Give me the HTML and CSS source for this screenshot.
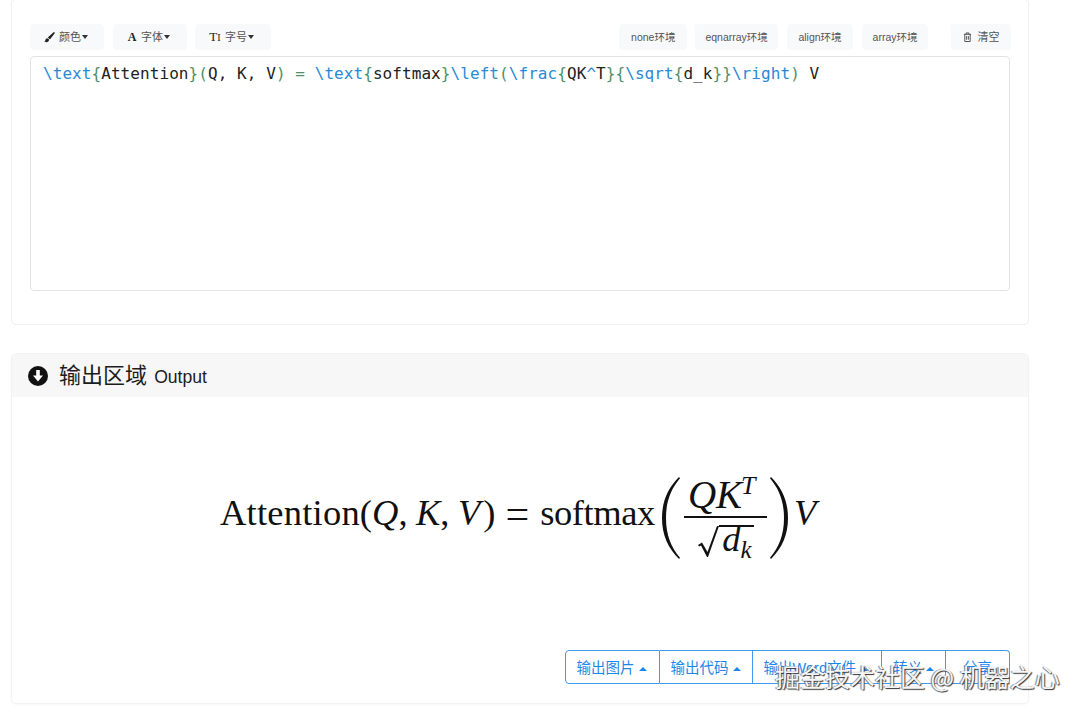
FILE: index.html
```html
<!DOCTYPE html>
<html lang="zh">
<head>
<meta charset="utf-8">
<title>公式编辑器</title>
<link rel="stylesheet" href="styles.css">
</head>
<body>
<main class="page">
  <section class="card input-card">
    <div class="toolbar">
      <button class="tool first"><svg class="ti" viewBox="0 0 12 12"><path d="M11.6.4c-.4-.4-1-.3-1.500.1L5 5.200c-.3.3-.6.7-.7 1.100l2 1.600c.4-.2.8-.5 1-.9l4.200-5.300c.4-.4.4-1 .1-1.300zM3.700 6.900C2.400 7 1.700 7.800 1.500 9c-.1.7-.6 1.100-1.300 1.200 1 1 3.200 1.300 4.500.2.700-.6.900-1.400.800-2.100z"/></svg>颜色<i class="caret"></i></button>
      <button class="tool font"><span class="ta">A</span>字体<i class="caret"></i></button>
      <button class="tool size"><span class="tt">T<small>I</small></span>字号<i class="caret"></i></button>
      <div class="spacer"></div>
      <button class="tool env none">none环境</button>
      <button class="tool env eqn">eqnarray环境</button>
      <button class="tool env align">align环境</button>
      <button class="tool env arr">array环境</button>
      <button class="tool clear"><svg class="tr" viewBox="0 0 10 11"><path fill="none" stroke="#444" d="M1 2.500h8M3.500 2.500V1h3v1.500M2 2.500v8h6v-8M4 4.500v4M6 4.500v4"/></svg>清空</button>
    </div>
    <div class="editor"><span class="c">\text</span><span class="g">{</span>Attention<span class="g">}(</span>Q, K, V<span class="g">) = </span><span class="c">\text</span><span class="g">{</span>softmax<span class="g">}</span><span class="c">\left</span><span class="g">(</span><span class="c">\frac</span><span class="g">{</span>QK<span class="c">^</span>T<span class="g">}{</span><span class="c">\sqrt</span><span class="g">{</span>d_k<span class="g">}}</span><span class="c">\right</span><span class="g">)</span> V</div>
  </section>

  <section class="card output-card">
    <header class="head">
      <svg class="hi" viewBox="0 0 20 20"><circle cx="10" cy="10" r="10"/><path fill="#fff" d="M8.200 4h3.600v5.500H15L10 15.500 5 9.500h3.200z"/></svg>
      <h2>输出区域 <small>Output</small></h2>
    </header>
    <div class="out-body">
      <div class="formula">
        <span class="rm attn">Attention</span><span class="rm">(</span><i>Q</i><span class="rm pc">,</span><i>K</i><span class="rm pc">,</span><i>V</i><span class="rm close">)</span><span class="rm eq">=</span><span class="rm sm">softmax</span><svg class="paren" viewBox="0 0 22 84"><path d="M20 1C9 12 3 25 3 42s6 30 17 41l1-1.200C12 71 7 59 7 42S12 13 21 2.200z"/></svg><span class="frac"><span class="num"><i>Q</i><i>K</i><sup>T</sup></span><span class="den"><svg class="rad" viewBox="0 0 22 32"><path d="M1 20l4-2.500 5.500 9.500L20 1h2L11 32h-1L4 20.500 2 21.500z"/></svg><span class="radi"><i>d</i><sub>k</sub></span></span></span><svg class="paren r" viewBox="0 0 22 84"><path d="M2 1c11 11 17 24 17 41S13 72 2 83L1 81.800C10 71 15 59 15 42S10 13 1 2.200z"/></svg><i class="lastv">V</i>
      </div>
      <div class="actions">
        <button class="img">输出图片<i class="up"></i></button>
        <button>输出代码<i class="up"></i></button>
        <button class="word">输出Word文件<i class="up"></i></button>
        <button>转义<i class="up"></i></button>
        <button class="share">分享</button>
      </div>
    </div>
  </section>
</main>
<div class="mark">掘金技术社区 @ 机器之心</div>
</body>
</html>
```
FILE: styles.css
```css
* { box-sizing: border-box; }
html, body { margin: 0; height: 712px; overflow: hidden; background: #fff; }
body { font-family: "Liberation Sans", "Noto Sans CJK SC", sans-serif; color: #212529; }
.page { width: 1029px; padding-left: 11px; margin-top: -1px; }
.card { width: 1018px; border: 1px solid #f0f0f0; border-radius: 5px; background: #fff; }
.input-card { height: 326px; padding: 24px 18px 0; }
.output-card { height: 351px; margin-top: 28px; border-color: #f2f2f2; box-shadow: 0 1px 2px rgba(0,0,0,.03); }

.toolbar { display: flex; height: 26px; gap: 8px; margin-right: -1px; }
.tool { display: flex; align-items: center; height: 26px; padding: 0 16px 0 14px; border: 0; border-radius: 4px; background: #f8f9fa; color: #555; font: 11px/1 "Liberation Sans", "Noto Sans CJK SC", sans-serif; }
.first { margin-right: 1px; }
.font { padding-right: 17px; }
.size { padding-right: 17px; }
.spacer { flex: 1; }
.env { font-size: 10.5px; }
.none { padding: 0 12px; }
.eqn { padding: 0 10px; }
.align { margin-left: 1px; padding: 0 11.5px; }
.arr { margin-left: 1px; padding: 0 10.5px; }
.clear { margin-left: 15px; padding: 0 11.5px; }
.ti { width: 11px; height: 11px; margin-right: 4px; fill: #222; }
.ta { width: 10px; margin-right: 4px; font: bold 12px "Liberation Serif", serif; color: #222; }
.tt { width: 12px; margin-right: 4px; font: 13px "Liberation Serif", serif; color: #222; }
.tt small { font-size: 10px; }
.tr { width: 9px; height: 10px; margin-right: 6px; }
.caret { width: 0; height: 0; margin-left: 1px; border: 3px solid transparent; border-top: 4px solid #333; border-bottom: 0; }

.editor { height: 235px; margin-top: 6px; padding: 6px 12px; border: 1px solid #e3e3e3; border-radius: 4px; font: 16px/21px "DejaVu Sans Mono", monospace; letter-spacing: .07px; color: #222; white-space: pre; background: #fff; }
.c { color: #2a8ad4; }
.g { color: #4f9068; }

.head { display: flex; align-items: center; height: 43px; padding-left: 16px; background: #f7f7f7; border-radius: 4px 4px 0 0; }
.hi { width: 20px; height: 20px; margin-right: 11px; fill: #111; }
.head h2 { margin: 0; padding-bottom: 5px; font-size: 22px; font-weight: 400; color: #1c1c1c; }
.head small { margin-left: 1px; font-size: 17.6px; }

.out-body { height: 306px; padding: 76px 18px 0; }
.formula { display: flex; align-items: center; height: 90px; padding-left: 190px; font: 36.5px/1 "Liberation Serif", serif; color: #111; white-space: nowrap; }
.formula i { font-style: italic; }
.formula > .rm, .formula > i { margin-bottom: 9px; }
.attn { letter-spacing: .22px; }
.pc { margin-right: 8.5px; }
.close { margin-left: 3px; }
.formula > .eq { margin: 0 11px 9px 10px; font-size: 42px; }
.sm { letter-spacing: -.4px; }
.paren { width: 22px; height: 84px; margin: 0 3px 0 4px; fill: #111; }
.paren.r { margin: 0 2px 0 2px; }
.frac { display: flex; flex-direction: column; align-items: center; width: 83px; }
.num { display: block; height: 40px; padding-left: 4px; border-bottom: 2px solid #111; width: 100%; font-size: 39px; line-height: 34px; white-space: nowrap; }
.num sup { margin-left: -1px; font-size: 26px; font-style: italic; line-height: 0; vertical-align: 14px; }
.den { display: flex; align-items: flex-end; height: 41px; }
.rad { width: 22px; height: 32px; fill: #111; margin-bottom: 2px; }
.radi { display: block; height: 34px; padding: 0 2px 0 3px; border-top: 2px solid #111; line-height: 24px; }
.radi sub { font-size: 25px; font-style: italic; line-height: 0; vertical-align: -7px; }
.formula > .lastv { margin-left: 1px; }

.actions { display: flex; justify-content: flex-end; height: 34px; margin-top: 87px; }
.actions button { height: 34px; padding: 3px 11px 0; border: 1px solid #3f9bee; border-left-width: 0; background: #fff; color: #1d86ea; font: 14.5px/1 "Liberation Sans", "Noto Sans CJK SC", sans-serif; display: flex; align-items: center; }
.actions button:first-child { border-left-width: 1px; border-radius: 4px 0 0 4px; }
.actions button:last-child { border-radius: 0 4px 4px 0; }
.actions .img { padding-right: 12px; }
.actions .word { padding-right: 13px; }
.actions .share { padding: 3px 17px 0; }
.up { width: 0; height: 0; margin-left: 4px; border: 4px solid transparent; border-bottom: 4.500px solid #1d86ea; border-top: 0; }

.mark { position: absolute; left: 775px; top: 661px; font: 25px/30px "Noto Sans CJK SC", sans-serif; color: #f6f6f6; text-shadow: 1px 1px 1px #333, -1px 0 1px #777; white-space: pre; }
```
